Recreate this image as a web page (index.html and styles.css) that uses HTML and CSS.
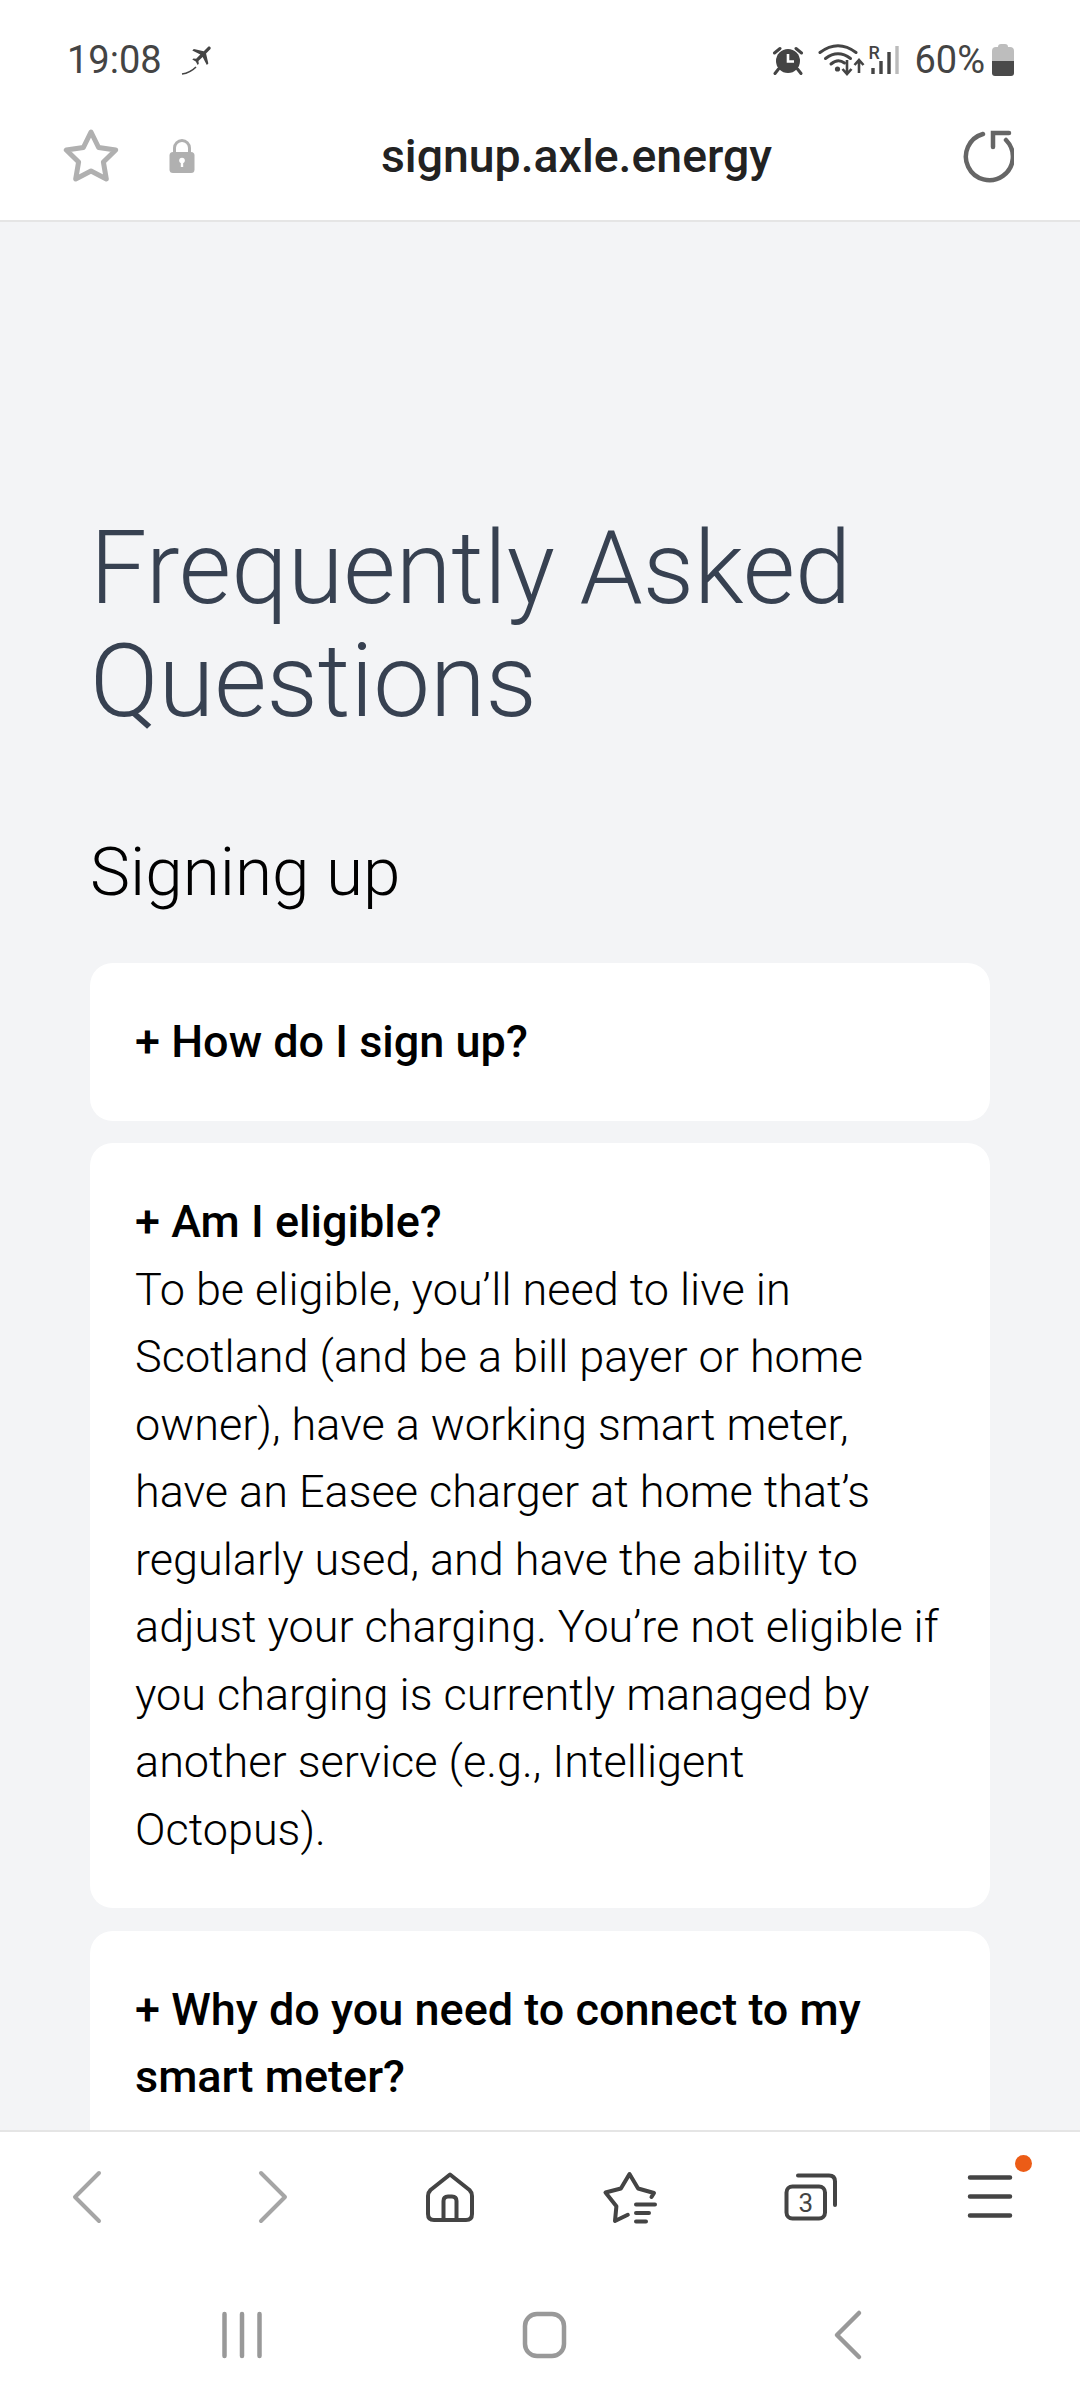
FILE: index.html
```html
<!DOCTYPE html>
<html lang="en">
<head>
  <meta charset="UTF-8" />
  <meta name="viewport" content="width=device-width, initial-scale=1.0"/>
  <title>Frequently Asked Questions</title>
  <link rel="stylesheet" href="styles.css">
</head>
<body>

<header class="status-bar">
  <div class="status-left">
    <span class="status-text">19:08</span>
    <svg class="icon-plane" width="36" height="34" viewBox="0 0 36 34">
      <g transform="translate(22 12) rotate(45) scale(1.08) translate(-12 -12)">
        <path fill="#444" d="M21 16v-2l-8-5V3.5c0-.83-.67-1.5-1.5-1.5S10 2.67 10 3.5V9l-8 5v2l8-2.5V19l-2 1.5V22l3.5-1 3.5 1v-1.5L13 19v-5.5l8 2.5z"/>
      </g>
      <path d="M1 31 Q9 30 15 24" fill="none" stroke="#444" stroke-width="1.6"/>
    </svg>
  </div>
  <div class="status-right">
    <svg class="icon-alarm" width="32" height="30" viewBox="0 0 32 30">
      <circle cx="16" cy="16" r="12" fill="#444"/>
      <path d="M16 9v7.5h6" fill="none" stroke="#fff" stroke-width="2.6"/>
      <path d="M2.5 8 8 3.5M29.5 8 24 3.5M6.5 24 3 28.5M25.5 24 29 28.5" stroke="#444" stroke-width="3" stroke-linecap="round"/>
    </svg>
    <svg class="icon-wifi" width="48" height="34" viewBox="0 0 48 34">
      <g fill="none" stroke="#444" stroke-width="3" stroke-linecap="round">
        <path d="M2 9.5 Q20 -4 38 9.5"/>
        <path d="M7.5 15.5 Q20 6 32.5 15.5"/>
        <path d="M13 21 Q20 15 26.5 20"/>
      </g>
      <circle cx="19.5" cy="26" r="2.6" fill="#444"/>
      <path d="M29 17v13M24.5 26l4.5 5 4.5-5M41 30V18M36.5 22l4.500-5 4.500 5" fill="none" stroke="#444" stroke-width="2.600"/>
    </svg>
    <div class="signal">
      <span class="signal-r">R</span>
      <svg width="34" height="30" viewBox="0 0 34 30">
        <path d="M7 23v6M15 16v13M23 7v22" stroke="#444" stroke-width="3.400" fill="none"/>
        <path d="M31 1v28" stroke="#bbb" stroke-width="3.400" fill="none"/>
      </svg>
    </div>
    <span class="status-text status-pct">60%</span>
    <svg class="icon-battery" width="22" height="32" viewBox="0 0 22 32">
      <path d="M6 3 Q6 0 9 0 H13 Q16 0 16 3 H18 Q22 3 22 7 V17 H0 V7 Q0 3 4 3 Z" fill="#bdbdbd"/>
      <path d="M0 17 H22 V29 Q22 32 19 32 H3 Q0 32 0 29 Z" fill="#4a4a4a"/>
    </svg>
  </div>
</header>

<nav class="toolbar">
  <svg class="icon-star" width="56" height="56" viewBox="0 0 56 56">
    <path d="M28 4 35.600 19.500 52.700 22 40.400 34 43.300 51 28 43 12.700 51 15.600 34 3.300 22 20.400 19.500Z" fill="none" stroke="#b0b0b0" stroke-width="5" stroke-linejoin="round"/>
  </svg>
  <svg class="icon-lock" width="26" height="36" viewBox="0 0 26 36">
    <path d="M5.500 15 V10 A7.500 7.500 0 0 1 20.500 10 V15" fill="none" stroke="#b0b0b0" stroke-width="3"/>
    <rect x="0.500" y="14" width="25" height="21" rx="3.500" fill="#b0b0b0"/>
    <circle cx="13" cy="22.500" r="2.800" fill="#fff"/>
    <rect x="11.800" y="23" width="2.400" height="6" fill="#fff"/>
  </svg>
  <span class="url">signup.axle.energy</span>
  <svg class="icon-reload" width="54" height="54" viewBox="0 0 54 54">
    <path d="M23 5 A23.500 23.500 0 1 0 46 11" fill="none" stroke="#666" stroke-width="4.500" stroke-linecap="round"/>
    <path d="M49 4 H33 V18" fill="none" stroke="#666" stroke-width="4.500" stroke-linecap="round"/>
  </svg>
</nav>

<main class="content">
  <h1 class="page-title">Frequently Asked Questions</h1>
  <h2 class="section-title">Signing up</h2>
  <div class="faq-list">
    <div class="faq-card">
      <div class="faq-q">+ How do I sign up?</div>
    </div>
    <div class="faq-card">
      <div class="faq-q">+ Am I eligible?</div>
      <p class="faq-a">To be eligible, you’ll need to live in Scotland (and be a bill payer or home owner), have a working smart meter, have an Easee charger at home that’s regularly used, and have the ability to adjust your charging. You’re not eligible if you charging is currently managed by another service (e.g., Intelligent Octopus).</p>
    </div>
    <div class="faq-card">
      <div class="faq-q">+ Why do you need to connect to my smart meter?</div>
    </div>
  </div>
</main>

<footer class="bottom">
  <div class="browser-nav">
    <div class="nav-item">
      <svg width="60" height="60" viewBox="0 0 60 60"><path d="M39 6 15 30 39 54" fill="none" stroke="#a5a5a5" stroke-width="4" stroke-linecap="round" stroke-linejoin="round"/></svg>
    </div>
    <div class="nav-item">
      <svg width="60" height="60" viewBox="0 0 60 60"><path d="M21 6 45 30 21 54" fill="none" stroke="#a5a5a5" stroke-width="4" stroke-linecap="round" stroke-linejoin="round"/></svg>
    </div>
    <div class="nav-item">
      <svg width="60" height="60" viewBox="0 0 60 60">
        <g fill="none" stroke="#444" stroke-width="4" stroke-linejoin="round">
          <path d="M30 7.500 49.500 23 Q52 25.500 52 29 V47 Q52 53 46 53 H14 Q8 53 8 47 V29 Q8 25.500 10.500 23 Z"/>
          <path d="M23.500 53 V34 Q23.500 29.500 28 29.500 H32 Q36.500 29.500 36.500 34 V53"/>
        </g>
      </svg>
    </div>
    <div class="nav-item">
      <svg width="60" height="60" viewBox="0 0 60 60">
        <g fill="none" stroke="#444" stroke-width="4" stroke-linecap="round" stroke-linejoin="round">
          <path d="M27.800 47.800 15 54 16.400 39.200 5.500 25.500 20.900 21.500 29.500 7 38.100 21.500 54 26 51.500 30"/>
          <path d="M36 37.500H55M36 46H49M36 54.500H46"/>
        </g>
      </svg>
    </div>
    <div class="nav-item">
      <svg width="60" height="60" viewBox="0 0 60 60">
        <g fill="none" stroke="#444" stroke-width="4" stroke-linecap="round">
          <rect x="6.500" y="19.500" width="38.500" height="32" rx="6"/>
          <path d="M18 8.500H49 Q55 8.500 55 14.500V38"/>
        </g>
        <text class="tab-count" x="25.700" y="45">3</text>
      </svg>
    </div>
    <div class="nav-item">
      <div class="menu-wrap">
        <svg width="60" height="60" viewBox="0 0 60 60">
          <path d="M10 10.500H50M10 29.500H50M10 48.500H50" stroke="#444" stroke-width="4.500" stroke-linecap="round"/>
        </svg>
        <span class="menu-dot"></span>
      </div>
    </div>
  </div>
  <div class="system-nav">
    <svg width="60" height="60" viewBox="0 0 60 60"><path d="M12.500 9V51M30 9V51M47.500 9V51" stroke="#999" stroke-width="4.500" stroke-linecap="round"/></svg>
    <svg width="60" height="60" viewBox="0 0 60 60"><rect x="10" y="9" width="39" height="42" rx="12" fill="none" stroke="#999" stroke-width="4.500"/></svg>
    <svg width="60" height="60" viewBox="0 0 60 60"><path d="M42 8 20 30 42 52" fill="none" stroke="#999" stroke-width="4.500" stroke-linecap="round" stroke-linejoin="round"/></svg>
  </div>
</footer>

</body>
</html>
```

FILE: styles.css
```css
* {
  box-sizing: border-box;
}
html, body {
  margin: 0;
  padding: 0;
}
body {
  width: 1080px;
  height: 2400px;
  display: flex;
  flex-direction: column;
  overflow: hidden;
  background: #fff;
  font-family: Roboto, "Noto Sans", sans-serif;
}

/* status bar */
.status-bar {
  height: 100px;
  padding: 20px 66px 0 67px;
  display: flex;
  align-items: center;
  justify-content: space-between;
  flex-shrink: 0;
}
.status-left, .status-right {
  display: flex;
  align-items: center;
}
.status-text {
  font-size: 38px;
  color: #444;
  line-height: 1;
}
.icon-plane {
  margin-left: 19px;
}
.icon-wifi {
  margin-left: 14px;
}
.signal {
  display: flex;
  position: relative;
}
.signal-r {
  position: absolute;
  left: 2px;
  top: -3px;
  font-size: 18px;
  font-weight: 500;
  color: #444;
}
.status-pct {
  margin-left: 14px;
}
.icon-battery {
  margin-left: 7px;
}

/* url toolbar */
.toolbar {
  height: 122px;
  padding: 0 66px 8px 63px;
  display: flex;
  align-items: center;
  border-bottom: 2px solid #e5e5e5;
  flex-shrink: 0;
}
.icon-lock {
  margin-left: 50px;
}
.url {
  flex: 1;
  text-align: center;
  font-size: 46.4px;
  font-weight: 500;
  color: #222;
  padding-right: 2px;
}

/* page */
.content {
  flex: 1;
  min-height: 0;
  overflow: hidden;
  background: #f3f4f6;
  padding: 291px 90px 0;
}
.page-title {
  margin: 0;
  font-size: 101.25px;
  line-height: 112.5px;
  font-weight: 300;
  color: #374151;
}
.section-title {
  margin: 89px 0 46px;
  font-size: 67.5px;
  line-height: 90px;
  font-weight: 300;
  color: #000;
}
.faq-list {
  display: flex;
  flex-direction: column;
  gap: 22.5px;
}
.faq-card {
  background: #fff;
  border-radius: 22.5px;
  padding: 45px;
  font-size: 45px;
  line-height: 67.5px;
  color: #000;
}
.faq-q {
  font-weight: 500;
}
.faq-a {
  margin: 0;
  font-weight: 300;
}

/* bottom bars */
.bottom {
  flex-shrink: 0;
  background: #fff;
  border-top: 2px solid #e5e5e5;
}
.browser-nav {
  height: 130px;
  display: grid;
  grid-template-columns: repeat(6, 180px);
}
.nav-item {
  display: flex;
  align-items: center;
  justify-content: center;
}
.tab-count {
  font-family: Roboto, sans-serif;
  font-size: 26px;
  fill: #444;
  text-anchor: middle;
}
.menu-wrap {
  position: relative;
  display: flex;
}
.menu-dot {
  position: absolute;
  left: 55px;
  top: -12px;
  width: 17px;
  height: 17px;
  border-radius: 50%;
  background: #ec5c16;
}
.system-nav {
  height: 138px;
  padding: 8px 203px 0 212px;
  display: flex;
  align-items: center;
  justify-content: space-between;
}
```
